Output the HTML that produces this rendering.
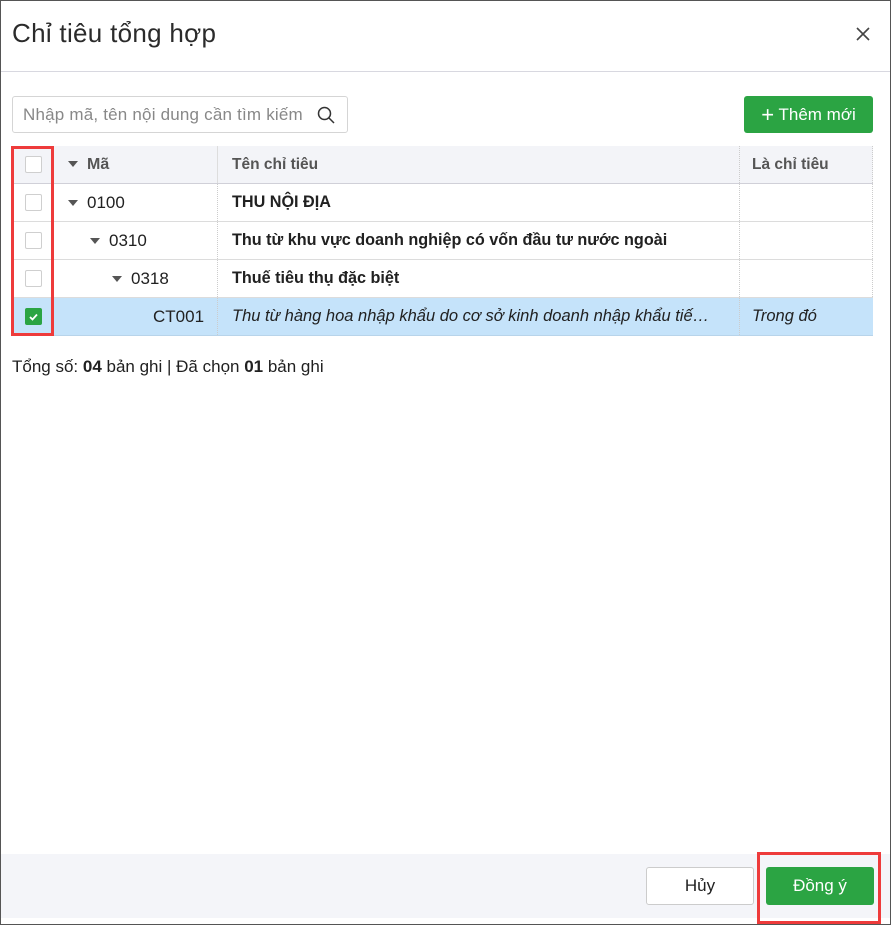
<!DOCTYPE html>
<html><head><meta charset="utf-8"><style>
*{box-sizing:border-box;margin:0;padding:0}
body{width:892px;height:926px;position:relative;background:#fff;font-family:"Liberation Sans",Arial,sans-serif;color:#212121;overflow:hidden}
.frame{position:absolute;left:0;top:0;width:891px;height:925px;border:1px solid #555;border-bottom:1px solid #555}
.abs{position:absolute}
.title{left:12px;top:18px;font-size:26px;color:#2b2b2b;letter-spacing:0.3px}
.hsep{left:1px;right:2px;top:71px;height:1px;background:#d8d8e0}
.search{left:12px;top:96px;width:336px;height:37px;border:1px solid #d5d5d5;border-radius:3px;font-size:17px;color:#888;padding:8px 10px;letter-spacing:0.2px}
.btn-g{background:#2ba443;color:#fff;border-radius:3px;font-size:17px;text-align:center}
.table{left:12px;top:146px;width:861px}
.row{position:absolute;left:0;width:861px;height:38px;border-bottom:1px solid #dcdcdc;font-size:16px}
.cell{position:absolute;top:0;height:37px;line-height:37px;white-space:nowrap}
.cb{position:absolute;left:13px;top:10px;width:17px;height:17px;border:1px solid #cfcfcf;border-radius:2px;background:#fff}
.vl{position:absolute;top:0;width:0;height:37px;border-left:1px dotted #ccc}
.tri{display:inline-block;width:0;height:0;border-left:5px solid transparent;border-right:5px solid transparent;border-top:6px solid #555;vertical-align:middle;margin-right:9px;position:relative;top:-1px}
b{font-weight:bold}
</style></head><body>
<div class="frame"></div>
<div class="abs title">Chỉ tiêu tổng hợp</div>
<svg class="abs" style="left:856px;top:27px" width="14" height="14"><path d="M1 1L13 13M13 1L1 13" stroke="#444" stroke-width="1.6"/></svg>
<div class="abs hsep"></div>
<div class="abs search">Nhập mã, tên nội dung cần tìm kiếm</div>
<svg class="abs" style="left:317px;top:106px" width="18" height="18"><circle cx="7.5" cy="7.5" r="6" fill="none" stroke="#333" stroke-width="1.5"/><path d="M12 12L17 17" stroke="#333" stroke-width="1.5"/></svg>
<div class="abs btn-g" style="left:744px;top:96px;width:129px;height:37px;line-height:37px"><span style="font-size:22px;font-weight:300;vertical-align:-2px">+</span> Thêm mới</div>

<div class="abs table">
 <div class="row" style="top:0;background:#f3f4f8;border-bottom:1px solid #d0d0d8;color:#555">
  <div class="cb"></div>
  <div class="cell" style="left:56px;font-weight:bold"><span class="tri"></span>Mã</div>
  <div class="vl" style="left:205px;border-left:1px solid #ddd"></div>
  <div class="cell" style="left:220px;font-weight:bold;font-size:15.5px">Tên chỉ tiêu</div>
  <div class="vl" style="left:727px"></div>
  <div class="cell" style="left:740px;font-weight:bold;font-size:15.5px">Là chỉ tiêu</div>
  <div class="vl" style="left:860px"></div>
 </div>
 <div class="row" style="top:38px"><div class="cb"></div>
  <div class="cell" style="left:56px;font-size:17px"><span class="tri"></span>0100</div>
  <div class="vl" style="left:205px"></div>
  <div class="cell" style="left:220px;font-weight:bold;font-size:16.2px">THU NỘI ĐỊA</div>
  <div class="vl" style="left:727px"></div><div class="vl" style="left:860px"></div></div>
 <div class="row" style="top:76px"><div class="cb"></div>
  <div class="cell" style="left:78px;font-size:17px"><span class="tri"></span>0310</div>
  <div class="vl" style="left:205px"></div>
  <div class="cell" style="left:220px;font-weight:bold;font-size:16.2px">Thu từ khu vực doanh nghiệp có vốn đầu tư nước ngoài</div>
  <div class="vl" style="left:727px"></div><div class="vl" style="left:860px"></div></div>
 <div class="row" style="top:114px"><div class="cb"></div>
  <div class="cell" style="left:100px;font-size:17px"><span class="tri"></span>0318</div>
  <div class="vl" style="left:205px"></div>
  <div class="cell" style="left:220px;font-weight:bold;font-size:16.2px">Thuế tiêu thụ đặc biệt</div>
  <div class="vl" style="left:727px"></div><div class="vl" style="left:860px"></div></div>
 <div class="row" style="top:152px;background:#c5e3fa;border-bottom:1px solid #b8d4ea">
  <div class="cb" style="background:#2ba443;border-color:#2ba443"><svg width="15" height="15" style="position:absolute;left:0;top:0"><path d="M4 8L6.5 10.5L11 5.5" fill="none" stroke="#fff" stroke-width="1.8"/></svg></div>
  <div class="cell" style="left:141px;font-size:17px">CT001</div>
  <div class="vl" style="left:205px"></div>
  <div class="cell" style="left:220px;font-style:italic;font-size:16.5px">Thu từ hàng hoa nhập khẩu do cơ sở kinh doanh nhập khẩu tiế…</div>
  <div class="vl" style="left:727px"></div>
  <div class="cell" style="left:740px;font-style:italic;font-size:16.5px">Trong đó</div></div>
</div>
<div class="abs" style="left:11px;top:146px;width:43px;height:190px;border:3px solid #ee3b3b"></div>

<div class="abs" style="left:12px;top:357px;font-size:17px">Tổng số: <b>04</b> bản ghi | Đã chọn <b>01</b> bản ghi</div>

<div class="abs" style="left:1px;right:2px;top:854px;height:64px;background:#f4f5f9"></div>
<div class="abs" style="left:646px;top:867px;width:108px;height:38px;border:1px solid #ccc;border-radius:3px;background:#fff;text-align:center;line-height:36px;font-size:17px">Hủy</div>
<div class="abs btn-g" style="left:766px;top:867px;width:108px;height:38px;line-height:38px">Đồng ý</div>
<div class="abs" style="left:757px;top:852px;width:124px;height:72px;border:3px solid #ee3b3b"></div>
</body></html>
